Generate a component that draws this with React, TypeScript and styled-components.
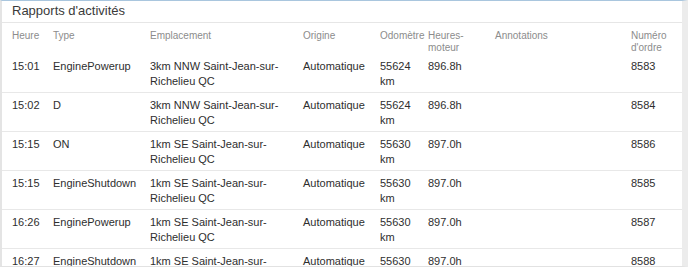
import React from 'react';
import styled, { createGlobalStyle } from 'styled-components';

const GlobalStyle = createGlobalStyle`
  html, body {
    margin: 0;
    padding: 0;
    background: #ffffff;
    font-family: 'Liberation Sans', Arial, sans-serif;
  }
`;

const Panel = styled.div`
  width: 688px;
  height: 267px;
  box-sizing: border-box;
  overflow: hidden;
  border-top: 1px solid #a9c6de;
  border-left: 2px solid #e4e4e4;
  border-right: 6px solid #ececec;
  border-bottom: 1px solid #e2e2e2;
  background: #ffffff;
  color: #333333;
`;

const Title = styled.div`
  height: 21px;
  line-height: 20px;
  padding-left: 10px;
  font-size: 13px;
  color: #3a3a3a;
  border-bottom: 1px solid #e6e6e6;
`;

const Table = styled.table`
  width: 100%;
  border-collapse: collapse;
  table-layout: fixed;
`;

const HeadCell = styled.th<{ $w?: number }>`
  box-sizing: border-box;
  width: ${(p) => (p.$w ? `${p.$w}px` : 'auto')};
  padding: 7px 6px 0 0;
  text-align: left;
  vertical-align: top;
  font-weight: normal;
  font-size: 10px;
  line-height: 12px;
  color: #8c8c8c;
  &:first-child {
    padding-left: 10px;
  }
`;

const Row = styled.tr`
  border-bottom: 1px solid #e8e8e8;
`;

const Cell = styled.td`
  padding: 5px 6px 3px 0;
  vertical-align: top;
  font-size: 11px;
  line-height: 15px;
  height: 30px;
  color: #2e2e2e;
  &:first-child {
    padding-left: 10px;
  }
`;

const columns = [
  { label: 'Heure', w: 51 },
  { label: 'Type', w: 97 },
  { label: 'Emplacement', w: 153 },
  { label: 'Origine', w: 77 },
  { label: 'Odomètre', w: 48 },
  { label: 'Heures-moteur', w: 67 },
  { label: 'Annotations', w: 136 },
  { label: "Numéro d'ordre" },
];

const rows = [
  ['15:01', 'EnginePowerup', '3km NNW Saint-Jean-sur-Richelieu QC', 'Automatique', '55624 km', '896.8h', '', '8583'],
  ['15:02', 'D', '3km NNW Saint-Jean-sur-Richelieu QC', 'Automatique', '55624 km', '896.8h', '', '8584'],
  ['15:15', 'ON', '1km SE Saint-Jean-sur-Richelieu QC', 'Automatique', '55630 km', '897.0h', '', '8586'],
  ['15:15', 'EngineShutdown', '1km SE Saint-Jean-sur-Richelieu QC', 'Automatique', '55630 km', '897.0h', '', '8585'],
  ['16:26', 'EnginePowerup', '1km SE Saint-Jean-sur-Richelieu QC', 'Automatique', '55630 km', '897.0h', '', '8587'],
  ['16:27', 'EngineShutdown', '1km SE Saint-Jean-sur-Richelieu QC', 'Automatique', '55630 km', '897.0h', '', '8588'],
];

const App: React.FC = () => (
  <>
    <GlobalStyle />
    <Panel>
      <Title>Rapports d&apos;activités</Title>
      <Table>
        <thead>
          <tr>
            {columns.map((c) => (
              <HeadCell key={c.label} $w={c.w}>
                {c.label}
              </HeadCell>
            ))}
          </tr>
        </thead>
        <tbody>
          {rows.map((r) => (
            <Row key={r[7]}>
              {r.map((v, i) => (
                // eslint-disable-next-line react/no-array-index-key
                <Cell key={i}>{v}</Cell>
              ))}
            </Row>
          ))}
        </tbody>
      </Table>
    </Panel>
  </>
);

export default App;
